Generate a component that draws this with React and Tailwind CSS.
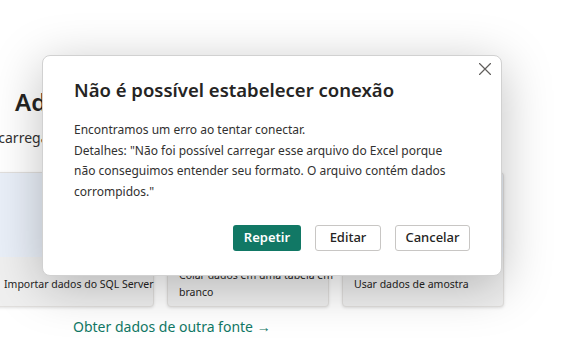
const CARDS = [
  { id: "excel", lines: ["Importar dados do Excel"] },
  { id: "sql", lines: ["Importar dados do SQL Server"] },
  { id: "paste", lines: ["Colar dados em uma tabela em", "branco"] },
  { id: "sample", lines: ["Usar dados de amostra"] },
];

function CloseIcon() {
  return (
    <svg width="12" height="12" viewBox="0 0 12 12" fill="none">
      <path d="M0.5 0.5L11.5 11.5M11.5 0.5L0.5 11.5" stroke="#605e5c" strokeWidth="1.2" strokeLinecap="round" />
    </svg>
  );
}

export default function App() {
  return (
    <div
      className="relative w-[578px] h-[343px] overflow-hidden bg-white text-[#252423]"
      style={{ fontFamily: '"Noto Sans", "Open Sans", sans-serif' }}
    >
      {/* Page behind the dialog */}
      <div className="flex flex-col items-start pt-[86px]">
        <h1 className="ml-[15px] text-[24px] leading-[32px] font-semibold whitespace-nowrap">
          Adicionar dados ao seu relatório
        </h1>
        <p className="mt-[10px] -ml-[71px] text-[14px] leading-[20px] text-[#323130] whitespace-nowrap">
          Depois de carregados, seus dados aparecerão no painel Dados.
        </p>

        <div className="mt-[24px] -ml-[183px] flex gap-[13px]">
          {CARDS.map((card) => (
            <div
              key={card.id}
              className="w-[162px] h-[135px] shrink-0 flex flex-col rounded-[4px] border border-[#e1dfdd] bg-[#efefef] shadow-[0_1px_3px_rgba(0,0,0,0.12)]"
            >
              <div className="h-[84px] rounded-t-[4px] bg-[#e9eff8]"></div>
              <div className="flex-1 flex flex-col justify-center pl-[11px] pt-[5px] text-[10.5px] leading-[17px] text-[#252423] whitespace-nowrap">
                {card.lines.map((line) => (
                  <span key={line}>{line}</span>
                ))}
              </div>
            </div>
          ))}
        </div>

        <a className="mt-[10px] ml-[73px] text-[14px] leading-[20px] text-[#117865] whitespace-nowrap">
          Obter dados de outra fonte →
        </a>
      </div>

      {/* Dialog */}
      <div className="absolute left-[42px] top-[55px] w-[460px] h-[221px] rounded-[8px] border border-[#d1d1d1] bg-white shadow-[0_10px_50px_rgba(0,0,0,0.25)] px-[31px] pt-[20px]">
        <button className="absolute right-[6px] top-[3px] p-[4px]">
          <CloseIcon />
        </button>
        <h2 className="text-[18.5px] leading-[28px] font-semibold text-[#252423] whitespace-nowrap">
          Não é possível estabelecer conexão
        </h2>
        <div className="mt-[16px] text-[12px] leading-[20.5px] text-[#323130] whitespace-nowrap">
          <p>Encontramos um erro ao tentar conectar.</p>
          <p>
            Detalhes: "Não foi possível carregar esse arquivo do Excel porque
            <br />
            não conseguimos entender seu formato. O arquivo contém dados
            <br />
            corrompidos."
          </p>
        </div>
        <div className="mt-[23px] flex justify-end gap-[14px]">
          <button className="w-[68px] h-[26px] rounded-[3px] bg-[#117865] text-white text-[13px] font-semibold">
            Repetir
          </button>
          <button className="w-[66px] h-[26px] rounded-[3px] border border-[#c8c6c4] bg-white text-[13px] font-medium text-[#252423]">
            Editar
          </button>
          <button className="w-[75px] h-[26px] rounded-[3px] border border-[#c8c6c4] bg-white text-[13px] font-medium text-[#252423]">
            Cancelar
          </button>
        </div>
      </div>
    </div>
  );
}
